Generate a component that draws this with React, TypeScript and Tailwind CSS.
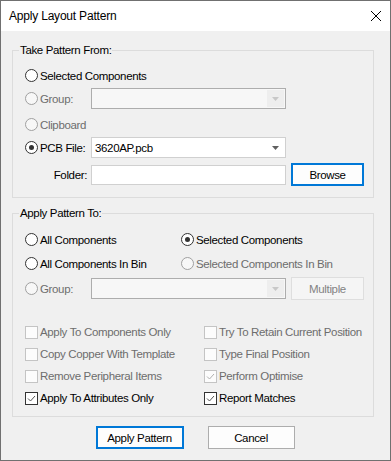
import React from 'react';

const font = "font-['Liberation_Sans',Arial,sans-serif] text-[11.5px] tracking-[-0.35px] leading-[14px] whitespace-nowrap";

const Radio = ({ label, checked = false, disabled = false }: { label: string; checked?: boolean; disabled?: boolean }) => (
    <div className="flex items-center">
        <span
            className={
                'w-[13px] h-[13px] rounded-full border flex items-center justify-center ' +
                (disabled ? 'border-[#a0a0a0] bg-[#f7f7f7]' : 'border-[#333333] bg-white')
            }
        >
            {checked && <span className="w-[5px] h-[5px] rounded-full bg-[#333333]" />}
        </span>
        <span className={'ml-[2px] ' + (disabled ? 'text-[#6d6d6d]' : 'text-black')}>{label}</span>
    </div>
);

const Check = ({ label, checked = false, disabled = false }: { label: string; checked?: boolean; disabled?: boolean }) => (
    <div className="flex items-center h-[22px]">
        <span
            className={
                'w-[13px] h-[13px] border flex items-center justify-center ' +
                (disabled ? 'border-[#c4c4c4] bg-[#fcfcfc]' : 'border-[#333333] bg-white')
            }
        >
            {checked && (
                <svg width="11" height="11" viewBox="0 0 11 11">
                    <path d="M2 5.5 L4.5 8 L9 3" fill="none" stroke={disabled ? '#b0b0b0' : '#555555'} strokeWidth="1" />
                </svg>
            )}
        </span>
        <span className={'ml-[2px] ' + (disabled ? 'text-[#6d6d6d]' : 'text-black')}>{label}</span>
    </div>
);

const Arrow = ({ color }: { color: string }) => (
    <svg width="7" height="4" viewBox="0 0 7 4">
        <path d="M0 0 H7 L3.5 4 Z" fill={color} />
    </svg>
);

const Combo = ({ value = '', disabled = false }: { value?: string; disabled?: boolean }) => (
    <div
        className={
            'w-[195px] h-[21px] border flex items-stretch ' +
            (disabled ? 'border-[#adadad] bg-[#f7f7f7]' : 'border-[#d0d0d0] bg-white')
        }
    >
        <span className="flex-1 pl-[3px] flex items-center">{value}</span>
        <span
            className={
                'w-[17px] flex items-center justify-center m-[1px] ' + (disabled ? 'bg-[#eeeeee]' : 'bg-white')
            }
        >
            <Arrow color={disabled ? '#c8c8c8' : '#606060'} />
        </span>
    </div>
);

const Legend = ({ text }: { text: string }) => (
    <div className="-mt-[8px] -ml-[6px] self-start px-[1px] bg-[#f0f0f0] h-[14px]">{text}</div>
);

export default function App() {
    return (
        <div className={'w-[391px] h-[461px] border border-[#707070] bg-[#f0f0f0] flex flex-col text-black ' + font}>
            {/* title bar */}
            <div className="h-[30px] bg-white flex items-center justify-between pl-[8px] pr-[9px] shrink-0">
                <span className="text-[12px] tracking-[-0.2px]">Apply Layout Pattern</span>
                <svg width="10" height="10" viewBox="0 0 10 10">
                    <path d="M0 0 L10 10 M10 0 L0 10" stroke="#000" strokeWidth="1" />
                </svg>
            </div>

            <div className="flex flex-col pl-[11px]">
                {/* Take Pattern From */}
                <div className="mt-[19px] w-[362px] border border-[#dcdcdc] flex flex-col pl-[12px] pb-[11px]">
                    <Legend text="Take Pattern From:" />
                    <div className="mt-[8px] h-[21px] flex items-center">
                        <Radio label="Selected Components" />
                    </div>
                    <div className="mt-[2px] h-[21px] flex items-center">
                        <div className="w-[66px]">
                            <Radio label="Group:" disabled />
                        </div>
                        <Combo disabled />
                    </div>
                    <div className="mt-[5px] h-[21px] flex items-center">
                        <Radio label="Clipboard" disabled />
                    </div>
                    <div className="mt-[2px] h-[21px] flex items-center">
                        <div className="w-[66px]">
                            <Radio label="PCB File:" checked />
                        </div>
                        <Combo value="3620AP.pcb" />
                    </div>
                    <div className="mt-[5px] h-[23px] flex items-center">
                        <div className="w-[66px] text-right pr-[4px]">Folder:</div>
                        <div className="w-[195px] h-[20px] border border-[#d0d0d0] bg-white" />
                        <button className="ml-[5px] w-[73px] h-[23px] border-2 border-[#0078d7] bg-[#fdfdfd] text-black">
                            Browse
                        </button>
                    </div>
                </div>

                {/* Apply Pattern To */}
                <div className="mt-[15px] w-[362px] border border-[#dcdcdc] flex flex-col pl-[12px] pb-[7px]">
                    <Legend text="Apply Pattern To:" />
                    <div className="mt-[9px] h-[21px] flex items-center">
                        <div className="w-[156px]">
                            <Radio label="All Components" />
                        </div>
                        <Radio label="Selected Components" checked />
                    </div>
                    <div className="mt-[3px] h-[21px] flex items-center">
                        <div className="w-[156px]">
                            <Radio label="All Components In Bin" />
                        </div>
                        <Radio label="Selected Components In Bin" disabled />
                    </div>
                    <div className="mt-[3px] h-[23px] flex items-center">
                        <div className="w-[66px]">
                            <Radio label="Group:" disabled />
                        </div>
                        <Combo disabled />
                        <button className="ml-[5px] w-[73px] h-[23px] border border-[#dedede] bg-[#f5f5f5] text-[#838383]">
                            Multiple
                        </button>
                    </div>
                    <div className="mt-[21px] grid grid-cols-[179px_1fr]">
                        <Check label="Apply To Components Only" disabled />
                        <Check label="Try To Retain Current Position" disabled />
                        <Check label="Copy Copper With Template" disabled />
                        <Check label="Type Final Position" disabled />
                        <Check label="Remove Peripheral Items" disabled />
                        <Check label="Perform Optimise" checked disabled />
                        <Check label="Apply To Attributes Only" checked />
                        <Check label="Report Matches" checked />
                    </div>
                </div>
            </div>

            {/* buttons */}
            <div className="mt-[9px] flex justify-center gap-[24px] pr-[1px]">
                <button className="w-[88px] h-[23px] border-2 border-[#0078d7] bg-[#fdfdfd]">Apply Pattern</button>
                <button className="w-[87px] h-[23px] border border-[#adadad] bg-[#fdfdfd]">Cancel</button>
            </div>
        </div>
    );
}
